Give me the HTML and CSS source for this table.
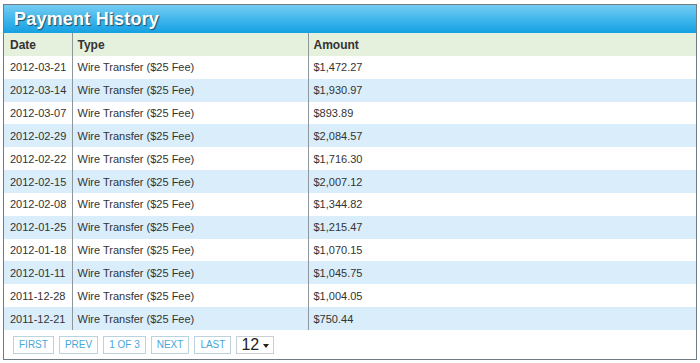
FILE: index.html
```html
<!DOCTYPE html>
<html>
<head>
<meta charset="utf-8">
<link rel="stylesheet" href="styles.css">
</head>
<body>
<div class="panel">
  <div class="title">Payment History</div>
  <table class="grid">
    <thead>
      <tr><th class="c-date">Date</th><th class="c-type">Type</th><th class="c-amt">Amount</th></tr>
    </thead>
    <tbody>
      <tr><td>2012-03-21</td><td>Wire Transfer ($25 Fee)</td><td>$1,472.27</td></tr>
      <tr><td>2012-03-14</td><td>Wire Transfer ($25 Fee)</td><td>$1,930.97</td></tr>
      <tr><td>2012-03-07</td><td>Wire Transfer ($25 Fee)</td><td>$893.89</td></tr>
      <tr><td>2012-02-29</td><td>Wire Transfer ($25 Fee)</td><td>$2,084.57</td></tr>
      <tr><td>2012-02-22</td><td>Wire Transfer ($25 Fee)</td><td>$1,716.30</td></tr>
      <tr><td>2012-02-15</td><td>Wire Transfer ($25 Fee)</td><td>$2,007.12</td></tr>
      <tr><td>2012-02-08</td><td>Wire Transfer ($25 Fee)</td><td>$1,344.82</td></tr>
      <tr><td>2012-01-25</td><td>Wire Transfer ($25 Fee)</td><td>$1,215.47</td></tr>
      <tr><td>2012-01-18</td><td>Wire Transfer ($25 Fee)</td><td>$1,070.15</td></tr>
      <tr><td>2012-01-11</td><td>Wire Transfer ($25 Fee)</td><td>$1,045.75</td></tr>
      <tr><td>2011-12-28</td><td>Wire Transfer ($25 Fee)</td><td>$1,004.05</td></tr>
      <tr><td>2011-12-21</td><td>Wire Transfer ($25 Fee)</td><td>$750.44</td></tr>
    </tbody>
  </table>
  <div class="pager">
    <span class="btn">FIRST</span>
    <span class="btn">PREV</span>
    <span class="btn">1 OF 3</span>
    <span class="btn">NEXT</span>
    <span class="btn">LAST</span>
    <span class="select">12 <span class="caret"></span></span>
  </div>
</div>
</body>
</html>
```
FILE: styles.css
```css
html, body {
  margin: 0;
  padding: 0;
  background: #ffffff;
}
body {
  font-family: "Liberation Sans", Arial, sans-serif;
  color: #333333;
}
.panel {
  margin: 4px 3px 0 3px;
  width: 692px;
  border: 1px solid #6f7b82;
  background: #ffffff;
}
.title {
  height: 28px;
  line-height: 28px;
  padding-left: 10px;
  font-size: 18px;
  font-weight: bold;
  color: #ffffff;
  letter-spacing: 0.2px;
  text-shadow: 1px 1px 1px #1c4f6c;
  background: linear-gradient(to bottom, #74cdf3 0%, #3db4ea 55%, #14a1e2 100%);
}
.grid {
  width: 100%;
  border-collapse: collapse;
  font-size: 11px;
}
.grid th {
  height: 23px;
  padding: 0 0 0 5px;
  text-align: left;
  font-size: 12px;
  font-weight: bold;
  color: #333333;
  background: #e5f0dd;
}
.grid td {
  height: 22.83px;
  padding: 0 0 0 5px;
  color: #333333;
}
.grid th:first-child, .grid td:first-child {
  padding-left: 6px;
}
.grid th, .grid td {
  box-sizing: border-box;
}
.c-date { width: 68px; }
.c-type { width: 236px; }
.grid th + th, .grid td + td {
  border-left: 1px solid #8d979c;
}
.grid tbody tr:nth-child(even) td {
  background: #d9eefa;
}
.pager {
  height: 29px;
  display: flex;
  align-items: center;
  gap: 5px;
  padding: 2px 0 0 9px;
  box-sizing: border-box;
}
.btn {
  display: inline-block;
  height: 16px;
  line-height: 16px;
  padding: 0 5px;
  border: 1px solid #bcd2dc;
  color: #47a6d8;
  font-size: 10px;
  background: #ffffff;
}
.select {
  display: inline-flex;
  align-items: center;
  gap: 4px;
  height: 16px;
  padding: 0 4px;
  border: 1px solid #c9d0d4;
  font-size: 16px;
  color: #222222;
}
.caret {
  width: 0;
  height: 0;
  border-left: 3.5px solid transparent;
  border-right: 3.5px solid transparent;
  border-top: 4px solid #222222;
  margin-top: 2px;
}
```
